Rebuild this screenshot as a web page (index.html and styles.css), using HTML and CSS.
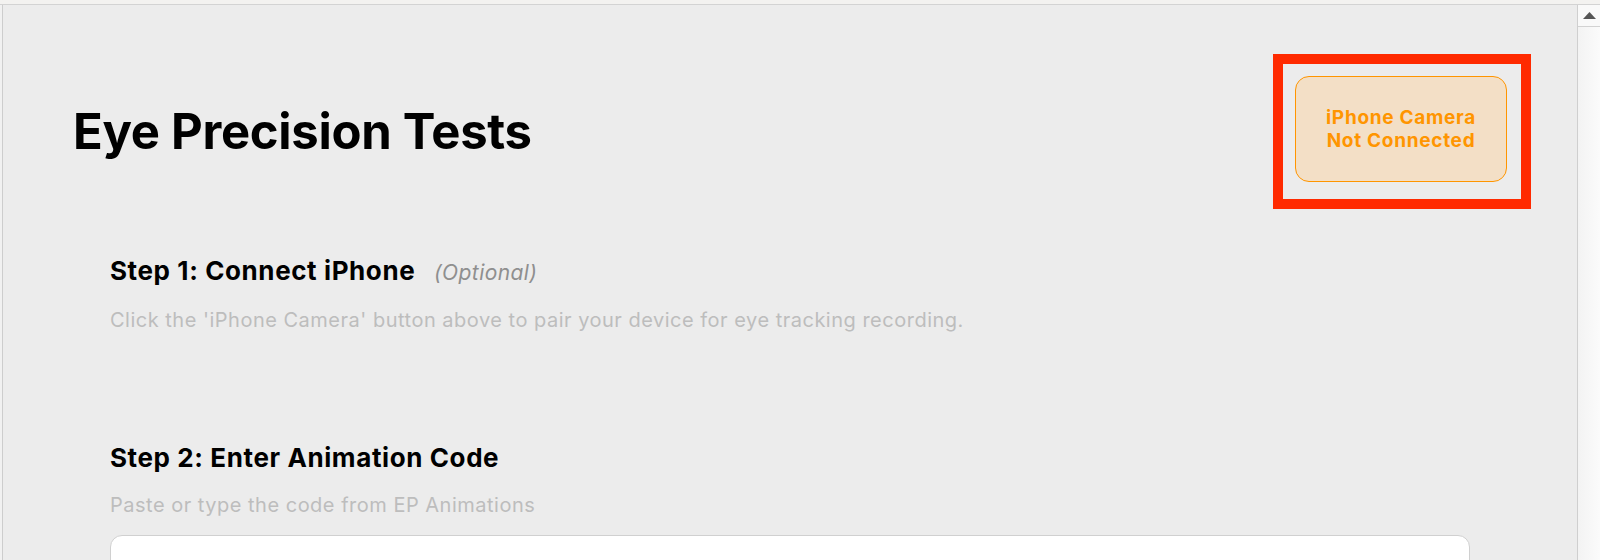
FILE: index.html
```html
<!DOCTYPE html>
<html lang="en">
<head>
<meta charset="utf-8">
<title>Eye Precision Tests</title>
<link rel="stylesheet" href="styles.css">
</head>
<body>
<div class="window">
  <div class="topstrip"></div>
  <div class="frame">
    <div class="leftedge"></div>
    <main class="content">
      <header class="header">
        <h1 class="title">Eye Precision Tests</h1>
        <div class="highlight">
          <button class="camera-btn" type="button">iPhone Camera<br>Not Connected</button>
        </div>
      </header>
      <section class="step step-first">
        <h2 class="step-title">Step 1: Connect iPhone <span class="optional">(Optional)</span></h2>
        <p class="step-desc">Click the 'iPhone Camera' button above to pair your device for eye tracking recording.</p>
      </section>
      <section class="step step-second">
        <h2 class="step-title">Step 2: Enter Animation Code</h2>
        <p class="step-desc">Paste or type the code from EP Animations</p>
        <textarea class="code-input" aria-label="Animation code"></textarea>
      </section>
    </main>
    <div class="scrollbar">
      <div class="scroll-up">
        <svg width="13" height="7" viewBox="0 0 13 7"><polygon points="6.5,0 13,7 0,7" fill="#555"/></svg>
      </div>
      <div class="scroll-track"></div>
    </div>
  </div>
</div>
</body>
</html>
```

FILE: styles.css
```css
* { box-sizing: border-box; }

html, body {
  margin: 0;
  padding: 0;
  height: 560px;
  overflow: hidden;
  background: #ececec;
  font-family: Inter, "Noto Sans", "Liberation Sans", sans-serif;
}

.window {
  display: flex;
  flex-direction: column;
  height: 560px;
}

.topstrip {
  height: 5px;
  flex: none;
  background: #f3f2f0;
  border-bottom: 1.5px solid #d3d3d3;
}

.frame {
  flex: 1;
  display: flex;
  min-height: 0;
}

.leftedge {
  width: 3px;
  flex: none;
  background: #f1f1f1;
  border-right: 1px solid #cdcdcd;
}

.content {
  flex: 1;
  min-width: 0;
  background: #ececec;
  overflow: hidden;
}

.header {
  display: flex;
  align-items: center;
  justify-content: space-between;
  padding: 49px 46px 0 70px;
}

.title {
  margin: 0;
  font-size: 49px;
  font-weight: 700;
  color: #000;
  letter-spacing: -0.3px;
}

.highlight {
  border: 10px solid #ff2a00;
  padding: 12px 14px 17px 12px;
}

.camera-btn {
  display: block;
  width: 212px;
  height: 106px;
  background: #f3dfc6;
  border: 1.5px solid #ff9500;
  border-radius: 14px;
  color: #ff9500;
  font-family: Inter, "Noto Sans", "Liberation Sans", sans-serif;
  font-size: 19px;
  font-weight: 700;
  line-height: 23px;
  letter-spacing: 0.7px;
  text-align: center;
  padding: 0;
}

.step {
  margin: 0 107px;
}

.step-first { margin-top: 47px; }
.step-second { margin-top: 111px; }

.step-title {
  margin: 0;
  font-size: 26px;
  line-height: 30px;
  font-weight: 700;
  color: #000;
  letter-spacing: 0.6px;
}

.optional {
  margin-left: 12px;
  font-size: 21px;
  font-weight: 400;
  font-style: italic;
  color: #8f8f8f;
  letter-spacing: 0.4px;
}

.step-desc {
  margin: 20px 0 0;
  font-size: 20px;
  line-height: 24px;
  color: #bdbdbd;
  letter-spacing: 0.5px;
}

.code-input {
  display: block;
  width: 100%;
  height: 120px;
  margin-top: 18px;
  background: #fff;
  border: 1.5px solid #d0d0d0;
  border-radius: 12px;
  resize: none;
}

.scrollbar {
  width: 23px;
  flex: none;
  display: flex;
  flex-direction: column;
  border-left: 1.5px solid #cfcfcf;
  background: linear-gradient(to right, #f3f3f3, #fbfbfb);
}

.scroll-up {
  height: 22px;
  display: flex;
  align-items: center;
  justify-content: center;
  border-bottom: 1px solid #d2d2d2;
  background: #f9f9f9;
}

.scroll-track { flex: 1; }
```
